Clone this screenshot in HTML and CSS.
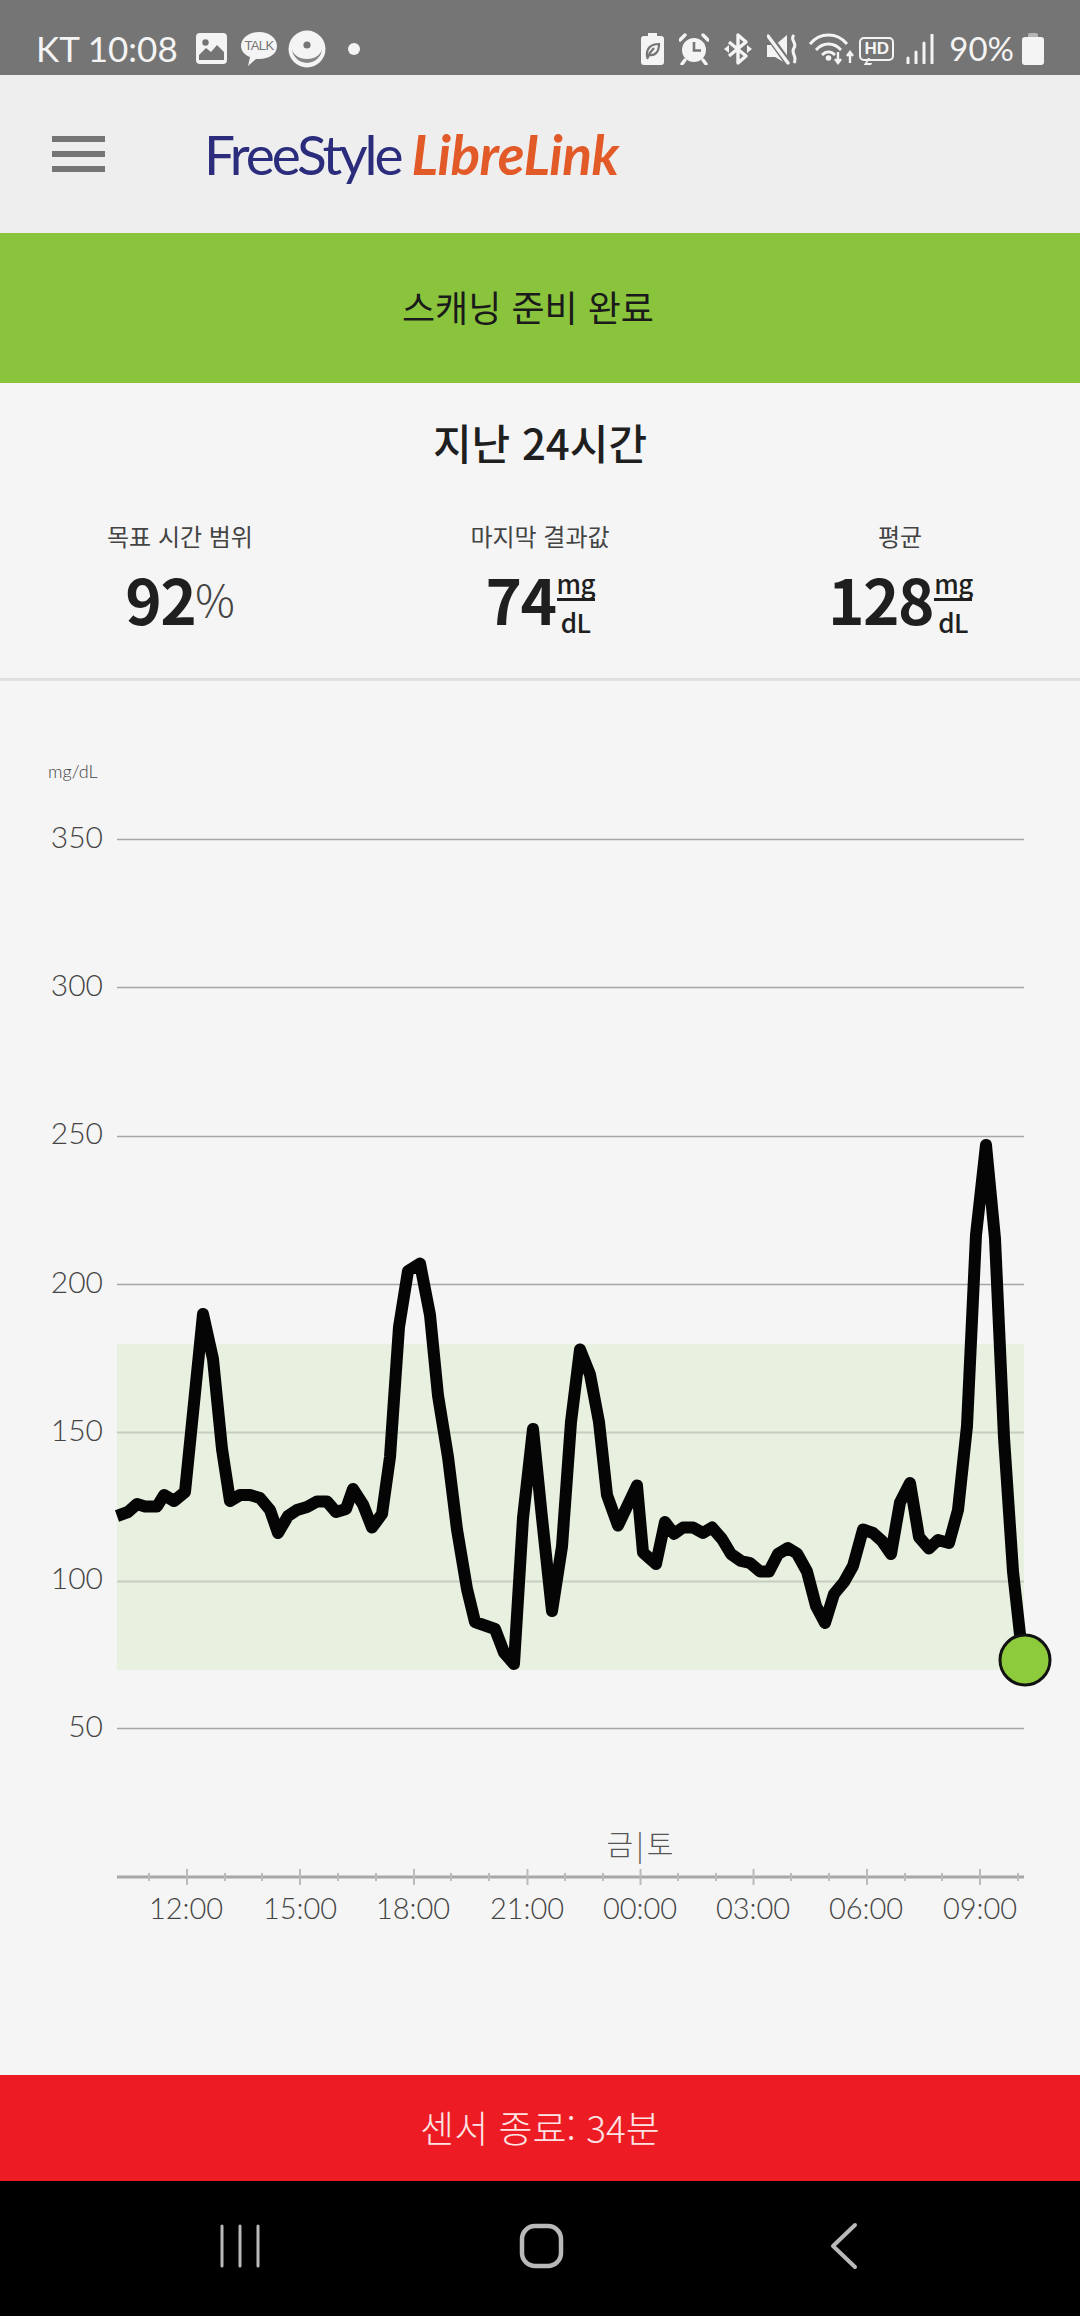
FILE: index.html
```html
<!DOCTYPE html>
<html lang="ko">
<head>
    <meta charset="UTF-8">
    <meta name="viewport" content="width=device-width, initial-scale=1.0">
    <title>FreeStyle LibreLink</title>
    <link rel="stylesheet" href="styles.css">
</head>
<body>
    <div class="screen">
        <!-- Status bar -->
        <div class="status-bar">
            <div class="status-left">
                <span class="status-text">KT 10:08</span>
                <svg class="icon-photo" width="31" height="31" viewBox="0 0 31 31">
                    <rect width="31" height="31" rx="4" fill="#f4f4f4"/>
                    <circle cx="9.5" cy="9.5" r="3.2" fill="#757575"/>
                    <path d="M3 27 V22 L10 15 L15 19 L21 12 L28 19 V27 Z" fill="#757575"/>
                </svg>
                <svg class="icon-talk" width="38" height="36" viewBox="0 0 38 36">
                    <path d="M19 1 C29 1 37 7 37 15 C37 23 29 28 19 28 L16 28 L8 35 L10 26 C5 24 1 20 1 15 C1 7 9 1 19 1 Z" fill="#f4f4f4"/>
                    <text x="19" y="19" class="talk-text" text-anchor="middle">TALK</text>
                </svg>
                <svg class="icon-disc" width="38" height="38" viewBox="0 0 38 38">
                    <circle cx="19" cy="19" r="18.5" fill="#f4f4f4"/>
                    <path d="M4 18 A15 15 0 0 0 34 18 A15 11 0 0 1 4 18 Z" fill="#858585"/>
                    <circle cx="19" cy="15" r="3.6" fill="#757575"/>
                </svg>
                <span class="status-dot"></span>
            </div>
            <div class="status-right">
                <svg width="23" height="32" viewBox="0 0 23 32">
                    <path d="M7 0 H16 V3 H20 Q23 3 23 6 V29 Q23 32 20 32 H3 Q0 32 0 29 V6 Q0 3 3 3 H7 Z" fill="#f4f4f4"/>
                    <path d="M6 24 C5 15 10 11 18 11 C18 19 14 23 8 22 L6 26 M8 21 L13 15" fill="none" stroke="#757575" stroke-width="2.2"/>
                </svg>
                <svg width="30" height="32" viewBox="0 0 30 32">
                    <circle cx="15" cy="17" r="12" fill="#f4f4f4"/>
                    <path d="M15 9 V17.5 H22" fill="none" stroke="#757575" stroke-width="2.6"/>
                    <path d="M1 7 L6 2 M29 7 L24 2 M6 27 L3 31 M24 27 L27 31" stroke="#f4f4f4" stroke-width="3.4" stroke-linecap="round"/>
                </svg>
                <svg width="28" height="32" viewBox="0 0 28 32">
                    <path d="M14 16 V2 L22 9 L5 23 M14 16 V30 L22 23 L5 9" fill="none" stroke="#f4f4f4" stroke-width="3.4" stroke-linejoin="round"/>
                    <path d="M23 12 L28 16 L23 20 Z M5 12 L0 16 L5 20 Z" fill="#f4f4f4"/>
                </svg>
                <svg class="icon-mute" width="31" height="32" viewBox="0 0 31 32">
                    <path d="M0 12 H8 L20 2 V31 L8 24 H0 Z" fill="#f4f4f4"/>
                    <path d="M1 2 L22 31" stroke="#757575" stroke-width="7"/>
                    <path d="M1 3 L21 30" stroke="#f4f4f4" stroke-width="3.4" stroke-linecap="round"/>
                    <path d="M27 2 C22 7 31 10 27 15 C23 20 31 23 27 30" fill="none" stroke="#f4f4f4" stroke-width="3"/>
                </svg>
                <svg class="icon-wifi" width="46" height="32" viewBox="0 0 46 32">
                    <path d="M1 11 C11 -1 28 -1 38 11 M7 17 C14 9 25 9 32 17 M13 22 C17 18 22 18 26 22" fill="none" stroke="#f4f4f4" stroke-width="2.8"/>
                    <circle cx="19.5" cy="25" r="2.8" fill="#f4f4f4"/>
                    <path d="M29 19 V30 M26 26 L29 30 L32 26 M41 30 V19 M38 23 L41 19 L44 23" fill="none" stroke="#f4f4f4" stroke-width="2.4"/>
                </svg>
                <div class="hd-badge">
                    <span class="hd-text">HD</span>
                    <span class="hd-tail"></span>
                </div>
                <svg width="28" height="30" viewBox="0 0 28 30">
                    <path d="M2 24 V29 M10 18 V29 M18 9 V29 M26 1 V29" stroke="#f4f4f4" stroke-width="3" stroke-linecap="round"/>
                </svg>
                <span class="status-text battery-text">90%</span>
                <div class="battery">
                    <span class="battery-cap"></span>
                    <span class="battery-body"></span>
                </div>
            </div>
        </div>

        <!-- App header -->
        <header class="app-header">
            <div class="menu-button">
                <span></span>
                <span></span>
                <span></span>
            </div>
            <div class="logo"><span class="logo-free">FreeStyle</span><span class="logo-libre">LibreLink</span></div>
        </header>

        <div class="scan-banner">스캐닝 준비 완료</div>

        <!-- Summary -->
        <section class="summary">
            <h1>지난 24시간</h1>
            <div class="stats">
                <div class="stat">
                    <div class="stat-label">목표 시간 범위</div>
                    <div class="stat-value">92<span class="percent">%</span></div>
                </div>
                <div class="stat">
                    <div class="stat-label">마지막 결과값</div>
                    <div class="stat-value">74<span class="unit"><span class="unit-top">mg</span><span class="unit-bottom">dL</span></span></div>
                </div>
                <div class="stat">
                    <div class="stat-label">평균</div>
                    <div class="stat-value">128<span class="unit"><span class="unit-top">mg</span><span class="unit-bottom">dL</span></span></div>
                </div>
            </div>
        </section>

        <!-- Glucose chart, coordinates are screen pixels -->
        <svg class="chart" width="1080" height="1394" viewBox="0 681 1080 1394">
            <rect x="117" y="1344" width="907" height="326" fill="#e8f0e0"/>
            <g class="grid">
                <line x1="117" x2="1024" y1="839.5" y2="839.5"/>
                <line x1="117" x2="1024" y1="987.5" y2="987.5"/>
                <line x1="117" x2="1024" y1="1136.5" y2="1136.5"/>
                <line x1="117" x2="1024" y1="1284.5" y2="1284.5"/>
                <line x1="117" x2="1024" y1="1432.5" y2="1432.5" class="in-range"/>
                <line x1="117" x2="1024" y1="1581.5" y2="1581.5" class="in-range"/>
                <line x1="117" x2="1024" y1="1728.5" y2="1728.5"/>
            </g>
            <text x="48" y="778" class="unit-label">mg/dL</text>
            <g class="y-labels">
                <text x="103" y="848">350</text>
                <text x="103" y="996">300</text>
                <text x="103" y="1144">250</text>
                <text x="103" y="1293">200</text>
                <text x="103" y="1441">150</text>
                <text x="103" y="1589">100</text>
                <text x="103" y="1737">50</text>
            </g>
            <polyline class="glucose" points="117,1516 128,1512 137,1504 145,1506.5 157,1506.5 164,1495 174,1501 185,1492 203,1314 213,1359 222,1449 230,1501 240,1495 250,1495 260,1498 270,1510 278,1533 288,1516 297,1510 307,1507 317,1501.5 327,1501.5 336,1512 346,1509 353,1489 363,1504.5 372,1527.5 382,1514 390,1457 399,1327 408,1271 420,1263.5 430,1315 438,1395.5 448,1457 457,1529.5 467,1589 475,1622 495,1629 504,1652.5 514,1664 523,1518 533,1429 542,1518 552,1611 562,1546.5 571,1422 580,1349.5 590,1374.5 599,1422 607,1495 618,1525.5 628,1504.5 637,1485.5 643,1552.5 656,1564 665,1522 674,1534 683,1527.5 693,1527.5 703,1533 712,1527.5 722,1539 731,1554 741,1561 750,1563 760,1571.5 769,1571.5 778,1554 788,1548 797,1553.5 807,1571.5 816,1606 825,1623 834,1594 844,1582 853,1566 863,1529.5 873,1533 882,1541 891,1554 900,1502.5 910,1483 919,1537 929,1548.5 938,1540 949,1543 958,1510 967,1426 976,1235 986,1145 995,1238.5 1004,1437.5 1013,1571.5 1020,1634.5 1020,1660"/>
            <circle cx="1025" cy="1660" r="25" fill="#8ecb3c" stroke="#111" stroke-width="3"/>

            <text x="640" y="1856" class="day-label">금 | 토</text>
            <line x1="117" x2="1024" y1="1877" y2="1877" class="axis"/>
            <path class="ticks-major" d="M187 1869V1885M300 1869V1885M414 1869V1885M527.5 1869V1885M640.5 1869V1885M753.5 1869V1885M867 1869V1885M980 1869V1885"/>
            <path class="ticks-minor" d="M149 1873V1881M225 1873V1881M262 1873V1881M338 1873V1881M376 1873V1881M451 1873V1881M489 1873V1881M565 1873V1881M603 1873V1881M678 1873V1881M716 1873V1881M791 1873V1881M829 1873V1881M905 1873V1881M942 1873V1881M1018 1873V1881"/>
            <g class="x-labels">
                <text x="186" y="1919">12:00</text>
                <text x="300" y="1919">15:00</text>
                <text x="413" y="1919">18:00</text>
                <text x="527" y="1919">21:00</text>
                <text x="640" y="1919">00:00</text>
                <text x="753" y="1919">03:00</text>
                <text x="866" y="1919">06:00</text>
                <text x="980" y="1919">09:00</text>
            </g>
        </svg>

        <div class="sensor-bar">센서 종료: 34분</div>

        <!-- Android nav -->
        <nav class="nav-bar">
            <svg width="42" height="44" viewBox="0 0 42 44">
                <path d="M3 2 V42 M21 2 V42 M39 2 V42" stroke="#b9b9b9" stroke-width="3" stroke-linecap="round"/>
            </svg>
            <svg class="nav-home" width="46" height="46" viewBox="0 0 46 46">
                <rect x="3" y="3" width="39" height="40" rx="13" fill="none" stroke="#b9b9b9" stroke-width="4.5"/>
            </svg>
            <svg width="28" height="48" viewBox="0 0 28 48">
                <path d="M25 3 L3 24 L25 45" fill="none" stroke="#b9b9b9" stroke-width="4" stroke-linecap="round" stroke-linejoin="round"/>
            </svg>
        </nav>
    </div>
</body>
</html>
```

FILE: styles.css
```css
* {
    box-sizing: border-box;
}

body {
    margin: 0;
    font-family: "Noto Sans CJK KR", "Noto Sans", sans-serif;
    background-color: #f5f5f5;
    color: #1f1f1f;
}

.screen {
    width: 1080px;
    height: 2316px;
    display: flex;
    flex-direction: column;
    overflow: hidden;
}

/* status bar */
.status-bar {
    height: 75px;
    flex: none;
    display: flex;
    justify-content: space-between;
    align-items: center;
    padding: 22px 36px 0 36px;
    background-color: #757575;
    color: #f4f4f4;
}

.status-left,
.status-right {
    display: flex;
    align-items: center;
}

.status-text {
    font-family: Lato, sans-serif;
    font-weight: 400;
    font-size: 35px;
    line-height: 1;
}

.icon-photo {
    margin-left: 18px;
}

.icon-talk {
    margin-left: 13px;
}

.icon-disc {
    margin-left: 10px;
}

.talk-text {
    font-family: "Liberation Sans", sans-serif;
    font-size: 13px;
    letter-spacing: -0.6px;
    fill: #757575;
}

.status-dot {
    width: 12px;
    height: 12px;
    margin-left: 22px;
    border-radius: 50%;
    background-color: #f4f4f4;
}

.status-right {
    gap: 15px;
}

.icon-mute {
    margin-right: -4px;
}

.icon-wifi {
    margin-right: -6px;
}

.hd-badge {
    position: relative;
    width: 35px;
    height: 24px;
    margin: 0 -3px 0 -5px;
    border: 2px solid #f4f4f4;
    border-radius: 5px;
    display: flex;
    align-items: center;
    justify-content: center;
}

.hd-text {
    font-family: "Liberation Sans", sans-serif;
    font-weight: 700;
    font-size: 17px;
    line-height: 1;
}

.hd-tail {
    position: absolute;
    left: 5px;
    bottom: -6px;
    width: 7px;
    height: 7px;
    border-left: 2px solid #f4f4f4;
    border-bottom: 2px solid #f4f4f4;
    transform: skewX(-30deg);
}

.battery-text {
    margin-right: -7px;
    font-size: 33px;
}

.battery {
    width: 22px;
    display: flex;
    flex-direction: column;
    align-items: center;
}

.battery-cap {
    width: 10px;
    height: 4px;
    background-color: #b5b5b5;
    border-radius: 2px 2px 0 0;
}

.battery-body {
    width: 22px;
    height: 28px;
    background-color: #f4f4f4;
    border-radius: 3px;
}

/* header */
.app-header {
    height: 158px;
    flex: none;
    display: flex;
    align-items: center;
    padding-left: 52px;
    background-color: #eeeeee;
}

.menu-button {
    width: 53px;
    display: flex;
    flex-direction: column;
    gap: 9px;
}

.menu-button span {
    height: 6px;
    background-color: #757575;
}

.logo {
    margin-left: 99px;
    font-family: Lato, sans-serif;
    font-size: 55px;
    line-height: 1;
    white-space: nowrap;
}

.logo-free {
    font-weight: 400;
    letter-spacing: -3px;
    color: #2b2d7c;
}

.logo-libre {
    margin-left: 11px;
    font-weight: 700;
    font-style: italic;
    letter-spacing: -0.5px;
    color: #e25a28;
}

.scan-banner {
    height: 150px;
    flex: none;
    display: flex;
    align-items: center;
    justify-content: center;
    padding: 0 24px 4px 0;
    background-color: #8ac43d;
    font-size: 36px;
    color: #1a1a1a;
}

/* summary */
.summary {
    height: 298px;
    flex: none;
    border-bottom: 3px solid #e0e0e0;
}

.summary h1 {
    margin: 0;
    padding-top: 29px;
    font-size: 42px;
    font-weight: 500;
    line-height: 60px;
    text-align: center;
}

.stats {
    display: grid;
    grid-template-columns: repeat(3, 1fr);
    margin-top: 46px;
}

.stat {
    display: flex;
    flex-direction: column;
    align-items: center;
}

.stat-label {
    font-size: 24px;
    line-height: 36px;
    color: #444;
}

.stat-value {
    display: flex;
    align-items: center;
    height: 76px;
    margin-top: 6px;
    font-size: 62px;
    font-weight: 600;
    letter-spacing: -1.5px;
    line-height: 1;
}

.percent {
    font-size: 44px;
    font-weight: 300;
    letter-spacing: 0;
    color: #444;
}

.unit {
    display: flex;
    flex-direction: column;
    align-items: center;
    width: 38px;
    margin: 6px 0 0 1px;
    font-size: 26px;
    font-weight: 500;
    letter-spacing: -0.5px;
}

.unit-top {
    width: 100%;
    height: 35px;
    line-height: 34px;
    text-align: center;
    border-bottom: 3px solid #1f1f1f;
}

.unit-bottom {
    height: 35px;
    line-height: 42px;
}

/* chart */
.chart {
    display: block;
    flex: none;
}

.grid line {
    stroke: #a6a6a6;
    stroke-width: 1.5;
}

.grid .in-range {
    stroke: #c6cec0;
    stroke-width: 2;
}

.unit-label {
    font-family: Lato, sans-serif;
    font-weight: 300;
    font-size: 18px;
    fill: #444;
}

.y-labels text {
    font-family: Lato, sans-serif;
    font-weight: 300;
    font-size: 30px;
    fill: #444;
    text-anchor: end;
}

.glucose {
    fill: none;
    stroke: #050505;
    stroke-width: 12;
    stroke-linejoin: round;
}

.day-label {
    font-weight: 300;
    font-size: 29px;
    word-spacing: -5px;
    fill: #555;
    text-anchor: middle;
}

.axis {
    stroke: #a8a8a8;
    stroke-width: 3;
}

.ticks-major,
.ticks-minor {
    fill: none;
    stroke: #bbb;
    stroke-width: 2;
}

.x-labels text {
    font-family: Lato, sans-serif;
    font-weight: 300;
    font-size: 29px;
    fill: #444;
    text-anchor: middle;
}

/* bottom */
.sensor-bar {
    height: 106px;
    flex: none;
    display: flex;
    align-items: center;
    justify-content: center;
    padding-bottom: 3px;
    background-color: #ed1c24;
    font-size: 37px;
    font-weight: 300;
    color: #fde3e3;
}

.nav-bar {
    flex: 1;
    display: flex;
    align-items: center;
    justify-content: space-between;
    padding: 0 222px 6px 219px;
    background-color: #000;
}

.nav-home {
    margin-right: 7px;
}
```
